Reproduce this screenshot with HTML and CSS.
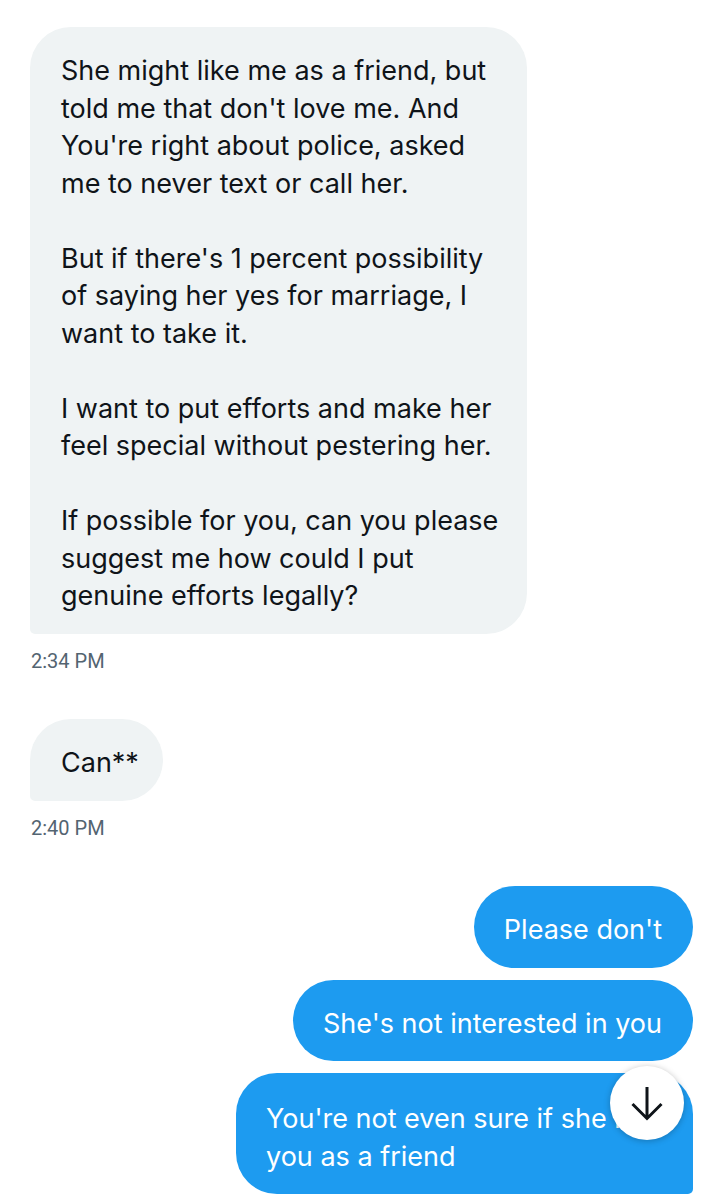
FILE: index.html
```html
<!DOCTYPE html>
<html lang="en">
<head>
    <meta charset="UTF-8">
    <meta name="viewport" content="width=device-width, initial-scale=1.0">
    <title>Messages</title>
    <link rel="stylesheet" href="styles.css">
</head>
<body>
    <div class="chat">
        <div class="group received">
            <div class="bubble">
                <p>She might like me as a friend, but told me that don't love me. And You're right about police, asked me to never text or call her.</p>
                <p>But if there's 1 percent possibility of saying her yes for marriage, I want to take it.</p>
                <p>I want to put efforts and make her feel special without pestering her.</p>
                <p>If possible for you, can you please suggest me how could I put genuine efforts legally?</p>
            </div>
            <div class="time">2:34 PM</div>
        </div>

        <div class="group received">
            <div class="bubble short">
                <p>Can**</p>
            </div>
            <div class="time">2:40 PM</div>
        </div>

        <div class="group sent">
            <div class="bubble">
                <p>Please don't</p>
            </div>
            <div class="bubble">
                <p>She's not interested in you</p>
            </div>
            <div class="bubble last">
                <p>You're not even sure if she likes you as a friend</p>
            </div>
        </div>
    </div>

    <button class="scroll-down" aria-label="Scroll to bottom">
        <svg width="36" height="36" viewBox="0 0 36 36">
            <path d="M18 2 V34 M3.5 19 L18 33.5 L32.5 19" fill="none" stroke="#0f1419" stroke-width="3"/>
        </svg>
    </button>
</body>
</html>
```

FILE: styles.css
```css
body {
    margin: 0;
    background-color: white;
    font-family: Inter, "Noto Sans", sans-serif;
    color: #0f1419;
    height: 1200px;
    overflow: hidden;
}
.chat {
    padding: 27px 30px 0 30px;
    display: flex;
    flex-direction: column;
    gap: 46px;
}
.group {
    display: flex;
    flex-direction: column;
}
.group.sent {
    align-items: flex-end;
    gap: 12px;
}
.bubble {
    font-size: 27px;
    line-height: 37.5px;
    padding: 25px 24px 19px 31px;
    box-sizing: border-box;
}
.bubble p {
    margin: 0 0 37.5px 0;
}
.bubble p:last-child {
    margin-bottom: 0;
}
.received .bubble {
    background-color: #eff3f4;
    border-radius: 41px 41px 41px 5px;
    align-self: flex-start;
    width: 497px;
}
.received .bubble.short {
    width: 133px;
    padding: 25px 20px 20px 31px;
}
.sent .bubble {
    background-color: #1d9bf0;
    color: white;
    border-radius: 41px;
    padding: 25px 31px 19px 30px;
    max-width: 457px;
}
.sent .bubble.last {
    border-radius: 41px 41px 5px 41px;
    padding-top: 27px;
    padding-right: 18px;
}
.time {
    font-family: Roboto, "Liberation Sans", sans-serif;
    font-size: 20px;
    line-height: 24px;
    color: #536471;
    margin-top: 15px;
    padding-left: 1px;
}
.scroll-down {
    position: absolute;
    left: 610px;
    top: 1066px;
    width: 74px;
    height: 74px;
    border-radius: 50%;
    border: none;
    background-color: white;
    box-shadow: 0 1px 6px rgba(0, 0, 0, 0.25);
    display: flex;
    align-items: center;
    justify-content: center;
    padding: 0;
    cursor: pointer;
}
```
